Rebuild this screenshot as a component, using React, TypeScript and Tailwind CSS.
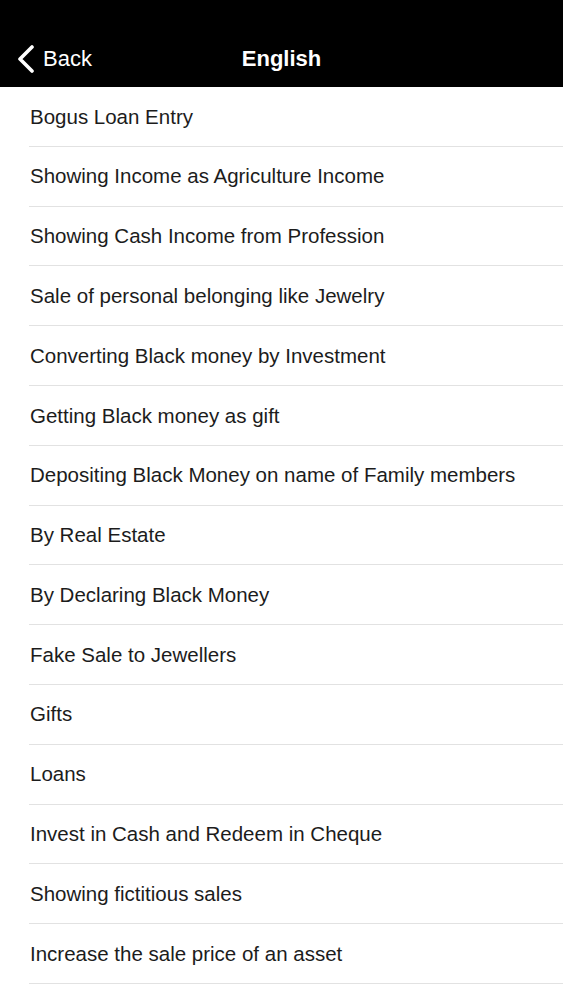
const items = [
  "Bogus Loan Entry",
  "Showing Income as Agriculture Income",
  "Showing Cash Income from Profession",
  "Sale of personal belonging like Jewelry",
  "Converting Black money by Investment",
  "Getting Black money as gift",
  "Depositing Black Money on name of Family members",
  "By Real Estate",
  "By Declaring Black Money",
  "Fake Sale to Jewellers",
  "Gifts",
  "Loans",
  "Invest in Cash and Redeem in Cheque",
  "Showing fictitious sales",
  "Increase the sale price of an asset",
]

export default function App() {
  return (
    <div className="w-[563px] h-[1000px] overflow-hidden bg-white font-['Liberation_Sans',Arial,sans-serif]">
      <header className="relative h-[87px] bg-black flex items-end pb-[14px]">
        <div className="flex items-center pl-[17px] text-white">
          <svg width="18" height="28" viewBox="0 0 18 28" fill="none">
            <path d="M15 2 L3 14 L15 26" stroke="white" strokeWidth="3.6" strokeLinecap="round" strokeLinejoin="round" />
          </svg>
          <span className="ml-[8px] text-[22px] leading-none">Back</span>
        </div>
        <h1 className="absolute left-0 right-0 bottom-[17px] text-center text-white text-[22px] font-bold leading-none">
          English
        </h1>
      </header>
      <ul>
        {items.map((item) => (
          <li key={item} className="pl-[29px]">
            <div className="h-[59.8px] flex items-center border-b border-[#e2e2e2] text-[20.5px] text-[#1c1c1c]">
              <span className="pl-px pt-px">{item}</span>
            </div>
          </li>
        ))}
      </ul>
    </div>
  )
}
